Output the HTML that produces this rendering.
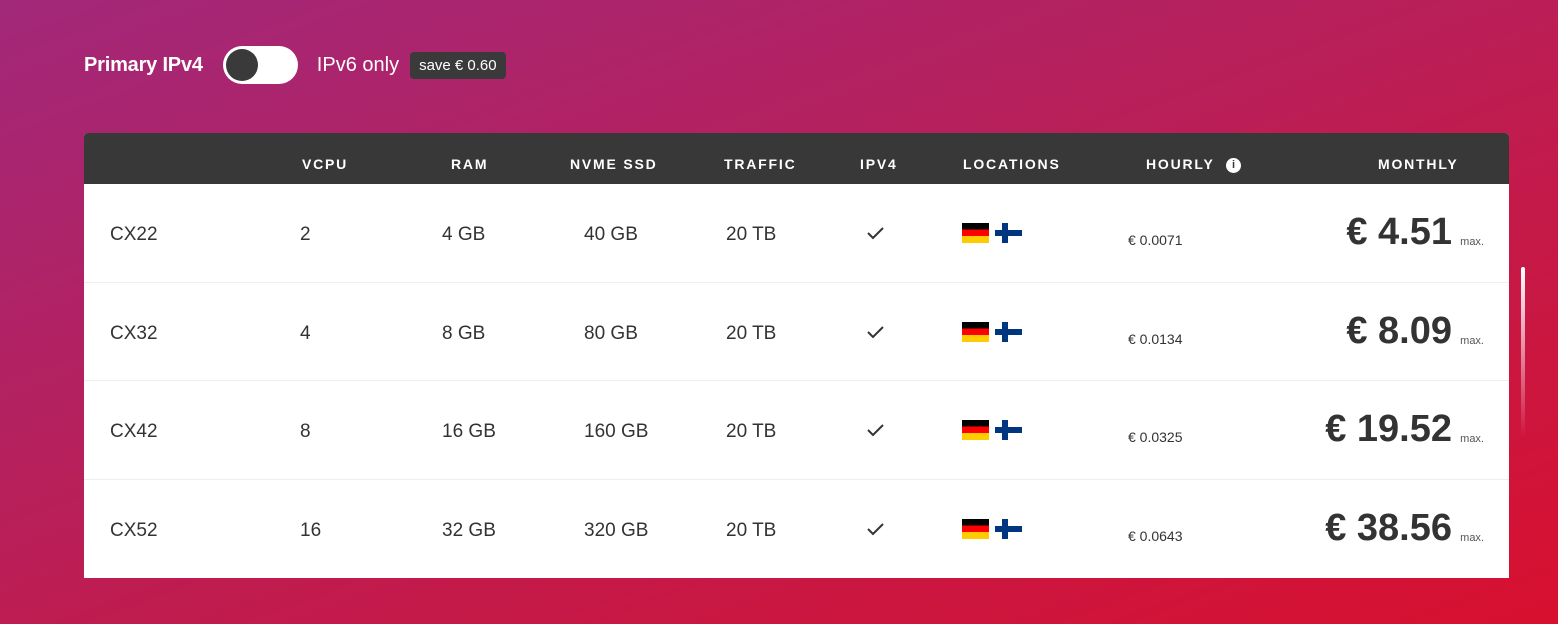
<!DOCTYPE html>
<html><head><meta charset="utf-8"><style>
*{margin:0;padding:0;box-sizing:border-box}
body{width:1558px;height:624px;overflow:hidden;font-family:"Liberation Sans",sans-serif;background:linear-gradient(160deg,#a2287a 0%,#b91f58 45%,#d8102f 100%);position:relative}
.top{position:absolute;top:45px;left:84px;height:40px;display:flex;align-items:center;color:#fff}
.t1{font-weight:bold;font-size:20px;letter-spacing:-0.2px}
.sw{width:75px;height:38px;background:#fff;border-radius:19px;margin:0 19px 0 20px;position:relative}
.sw i{position:absolute;left:3px;top:3px;width:32px;height:32px;border-radius:50%;background:#3a3a3a}
.t2{font-size:20px}
.badge{background:#3a3a3a;border-radius:4px;font-size:15px;padding:5px 9px;margin-left:11px}
.tbl{position:absolute;left:84px;top:133px;width:1425px;height:445px;background:#fff;border-radius:4px 4px 0 0;overflow:hidden}
.hd{height:51px;background:#383838;color:#fff;font-weight:bold;font-size:14px;letter-spacing:1.8px;position:relative}
.hd span{position:absolute;top:23px}
.row{height:98.5px;border-bottom:1px solid #eee;position:relative;color:#333;font-size:19px}
.row span{position:absolute;top:40px}
.row .h{font-size:14px;top:48px}
.row .m{right:57px;top:27px;font-size:38px;font-weight:bold}
.row .x{right:25px;top:52px;font-size:11px;color:#555}
.ck{position:absolute;left:782px;top:41px}
.de{position:absolute;left:878px;top:39px;width:27px;height:20px;background:linear-gradient(#000 33%,#f00 33% 66%,#fc0 66%)}
.fi{position:absolute;left:911px;top:39px;width:27px;height:20px;background:#fff}
.fi:before{content:"";position:absolute;left:0;top:7px;width:27px;height:6px;background:#003580}
.fi:after{content:"";position:absolute;left:7px;top:0;width:6px;height:20px;background:#003580}
.sb{position:absolute;left:1521px;top:267px;width:4px;height:170px;border-radius:2px;background:linear-gradient(#fff,rgba(255,255,255,0))}
</style></head><body>
<div class="top"><span class="t1">Primary IPv4</span><div class="sw"><i></i></div><span class="t2">IPv6 only</span><span class="badge">save € 0.60</span></div>
<div class="tbl">
<div class="hd"><span style="left:218px">VCPU</span><span style="left:367px">RAM</span><span style="left:486px">NVME SSD</span><span style="left:640px">TRAFFIC</span><span style="left:776px">IPV4</span><span style="left:879px">LOCATIONS</span><span style="left:1062px">HOURLY <b style="display:inline-block;width:15px;height:15px;border-radius:50%;background:#fff;color:#383838;font-size:11px;text-align:center;line-height:15px;letter-spacing:0;margin-left:6px;vertical-align:1px">i</b></span><span style="left:1294px">MONTHLY</span></div>
<div class="row"><span style="left:26px">CX22</span><span style="left:216px">2</span><span style="left:358px">4 GB</span><span style="left:500px">40 GB</span><span style="left:642px">20 TB</span><svg class="ck" width="20" height="16"><path d="M2 8l5 5 10-10" stroke="#333" stroke-width="2" fill="none"/></svg><i class="de"></i><i class="fi"></i><span class="h" style="left:1044px">€ 0.0071</span><span class="m">€ 4.51</span><span class="x">max.</span></div>
<div class="row"><span style="left:26px">CX32</span><span style="left:216px">4</span><span style="left:358px">8 GB</span><span style="left:500px">80 GB</span><span style="left:642px">20 TB</span><svg class="ck" width="20" height="16"><path d="M2 8l5 5 10-10" stroke="#333" stroke-width="2" fill="none"/></svg><i class="de"></i><i class="fi"></i><span class="h" style="left:1044px">€ 0.0134</span><span class="m">€ 8.09</span><span class="x">max.</span></div>
<div class="row"><span style="left:26px">CX42</span><span style="left:216px">8</span><span style="left:358px">16 GB</span><span style="left:500px">160 GB</span><span style="left:642px">20 TB</span><svg class="ck" width="20" height="16"><path d="M2 8l5 5 10-10" stroke="#333" stroke-width="2" fill="none"/></svg><i class="de"></i><i class="fi"></i><span class="h" style="left:1044px">€ 0.0325</span><span class="m">€ 19.52</span><span class="x">max.</span></div>
<div class="row" style="border:0"><span style="left:26px">CX52</span><span style="left:216px">16</span><span style="left:358px">32 GB</span><span style="left:500px">320 GB</span><span style="left:642px">20 TB</span><svg class="ck" width="20" height="16"><path d="M2 8l5 5 10-10" stroke="#333" stroke-width="2" fill="none"/></svg><i class="de"></i><i class="fi"></i><span class="h" style="left:1044px">€ 0.0643</span><span class="m">€ 38.56</span><span class="x">max.</span></div>
</div>
<div class="sb"></div>
</body></html>
